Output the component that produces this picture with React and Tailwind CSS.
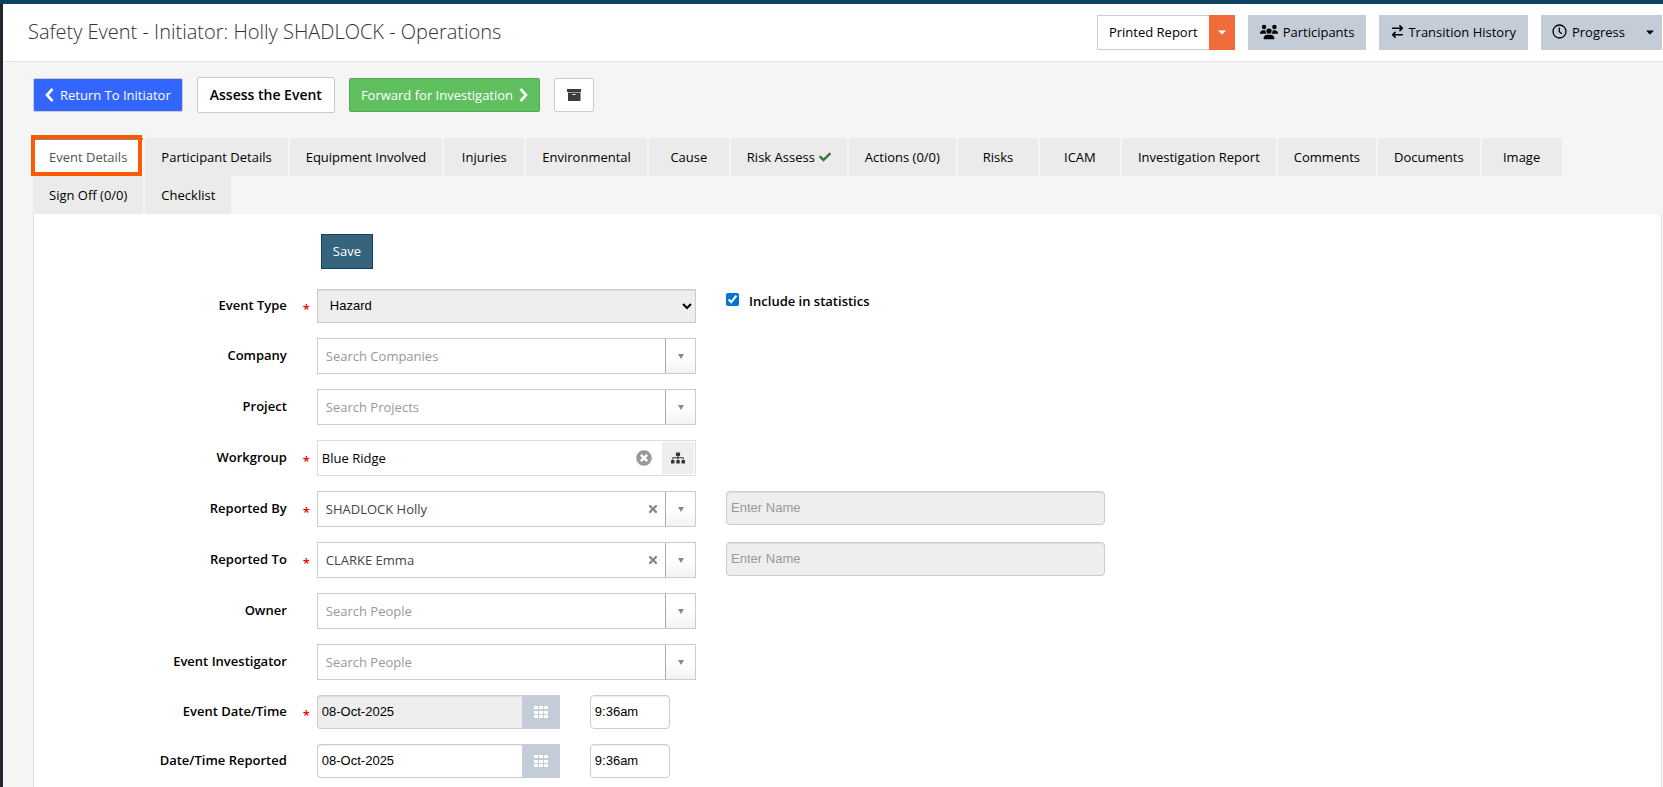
import React, { useState } from "react";
import { FaSitemap, FaCaretDown, FaCheck, FaTimesCircle, FaTimes } from "react-icons/fa";
import { FaArrowRightArrowLeft, FaUsers } from "react-icons/fa6";

const tabs = [
  "Event Details",
  "Participant Details",
  "Equipment Involved",
  "Injuries",
  "Environmental",
  "Cause",
  "Risk Assess",
  "Actions (0/0)",
  "Risks",
  "ICAM",
  "Investigation Report",
  "Comments",
  "Documents",
  "Image",
  "Sign Off (0/0)",
  "Checklist",
];

const inputClass =
  "w-full h-[34px] border border-[#ccc] rounded px-1 pb-px font-['Liberation_Sans',Arial,sans-serif] text-[13px] text-black placeholder:text-[#999] shadow-[inset_0_1px_1px_rgba(0,0,0,0.075)] outline-none";

function ArchiveIcon() {
  return (
    <svg width="14" height="14" viewBox="0 0 14 14" fill="#3c3c3c">
      <path d="M0 1h14v3H0z" />
      <path d="M1 4.600h12.500v8.400H1zM5.500 6v1h3V6z" fillRule="evenodd" />
    </svg>
  );
}

function Chevron({ right }) {
  return (
    <svg width="9" height="14" viewBox="0 0 9 14" fill="none" stroke="currentColor" strokeWidth="2.600">
      <path d={right ? "M1.500 1l5.500 6-5.500 6" : "M7.500 1L2 7l5.500 6"} />
    </svg>
  );
}

function ClockIcon() {
  return (
    <svg width="15" height="15" viewBox="0 0 15 15" fill="none" stroke="currentColor" strokeWidth="1.300">
      <circle cx="7.500" cy="7.500" r="6.500" />
      <path d="M7.300 3.500v4.200l2.600 2" />
    </svg>
  );
}

function GridIcon() {
  return (
    <svg width="14" height="14" viewBox="0 0 14 14" fill="#fff">
      {[1, 6, 10].map((y) =>
        [0, 5, 10].map((x) => <rect key={`${x}-${y}`} x={x} y={y} width="4" height="3" />)
      )}
    </svg>
  );
}

function Row({ label, id, required, side, children }) {
  return (
    <div className="grid grid-cols-12 mb-[15px]">
      <div className="col-span-2 flex items-center justify-end pr-[15px] pb-[2px] relative">
        <label htmlFor={id} className="font-semibold text-right">{label}</label>
        {required && <span className="absolute -right-2 top-1/2 -translate-y-1/2 pt-[6px] text-[13px] font-semibold text-[#e00]">*</span>}
      </div>
      <div className="col-span-3 px-[15px]">{children}</div>
      <div className="col-span-3 px-[15px]">{side}</div>
    </div>
  );
}

function Combo({ id, placeholder, initial = "" }) {
  const [value, setValue] = useState(initial);
  return (
    <div className="flex h-9 border border-[#ccc] bg-white">
      <input
        id={id}
        value={value}
        placeholder={placeholder}
        onChange={(e) => setValue(e.target.value)}
        className="flex-1 min-w-0 pl-2 text-[#444] placeholder:text-[#999] outline-none"
      />
      {value && (
        <button aria-label="Clear" onClick={() => setValue("")} className="px-[6px] text-[#888]">
          <FaTimes size={12} />
        </button>
      )}
      <button aria-label="Open list" className="w-[30px] flex items-center justify-center border-l border-[#aaa] bg-linear-to-b from-white from-50% to-[#f3f3f3]">
        <svg width="6" height="5" viewBox="0 0 6 5" fill="#888"><path d="M0 0h6L3 5z" /></svg>
      </button>
    </div>
  );
}

function DateTime({ id, disabled }) {
  return (
    <div className="flex">
      <input
        id={id}
        defaultValue="08-Oct-2025"
        readOnly={disabled}
        className={`${inputClass} max-w-[205px] rounded-r-none border-r-0 ${disabled ? "bg-[#eee]" : "bg-white"}`}
      />
      <button aria-label="Pick date" className="w-[38px] shrink-0 flex items-center justify-center bg-[#c4ccd8]">
        <GridIcon />
      </button>
      <input aria-label="Time" defaultValue="9:36am" className={`${inputClass} ml-[30px] max-w-20 bg-white`} />
    </div>
  );
}

export default function App() {
  const [activeTab, setActiveTab] = useState("Event Details");

  return (
    <div className="h-screen overflow-hidden flex flex-col border-t-4 border-[#0d4261] bg-[#f5f5f5] font-['Open_Sans',sans-serif] text-[13px] leading-5 text-black">
      <div className="flex flex-1 min-h-0">
        <aside className="w-[3px] shrink-0 bg-[#23262f]"></aside>
        <div className="flex-1 min-w-0 flex flex-col">
          <header className="flex items-center justify-between h-[58px] shrink-0 pl-[25px] pr-px pb-px bg-white border-b border-[#e5e5e5]">
            <h1 className="pb-px text-xl leading-8 font-light text-[#333] whitespace-nowrap">
              Safety Event - Initiator: Holly SHADLOCK - Operations
            </h1>
            <div className="flex gap-[13px] whitespace-nowrap">
              <div className="flex h-[35px]">
                <button className="px-[11px] pb-px border border-r-0 border-[#ccc] bg-white">Printed Report</button>
                <button aria-label="Report options" className="w-[26px] flex items-center justify-center bg-[#f26b3a] text-white">
                  <FaCaretDown size={12} />
                </button>
              </div>
              <button className="h-[35px] px-3 pb-px flex items-center gap-[5px] bg-[#c4ccd8]">
                <FaUsers size={18} /> Participants
              </button>
              <button className="h-[35px] px-3 pb-px flex items-center gap-1 bg-[#c4ccd8]">
                <FaArrowRightArrowLeft size={13} /> Transition History
              </button>
              <div className="flex h-[35px] bg-[#c4ccd8]">
                <button className="px-[11px] pb-px flex items-center gap-[5px]">
                  <ClockIcon /> Progress
                </button>
                <button aria-label="Progress options" className="w-[26px] flex items-center justify-center border-l border-[#c9cbd0]">
                  <FaCaretDown size={12} />
                </button>
              </div>
            </div>
          </header>

          <main className="flex-1 min-h-0 flex flex-col pl-[30px] pr-px pt-[15px]">
            <div className="flex items-center gap-[14px] h-9">
              <button className="h-[34px] px-[11px] flex items-center gap-[6px] border border-[#ccc] rounded-xs bg-[#36f] text-white">
                <Chevron /> Return To Initiator
              </button>
              <button className="h-9 px-3 border border-[#ccc] rounded-xs bg-white text-sm font-semibold">Assess the Event</button>
              <button className="h-[34px] px-[11px] flex items-center gap-[6px] border border-[#4cae4c] rounded-xs bg-[#60c060] text-white">
                Forward for Investigation <Chevron right />
              </button>
              <button aria-label="Archive" className="h-[34px] w-10 flex items-center justify-center border border-[#ccc] rounded-xs bg-white">
                <ArchiveIcon />
              </button>
            </div>

            <nav className="flex flex-wrap gap-x-[2px] mt-[25px] pr-[60px]">
              {tabs.map((tab) => (
                <div key={tab} className="relative">
                  <button
                    onClick={() => setActiveTab(tab)}
                    className={`h-[38px] min-w-20 px-4 flex items-center justify-center gap-1 ${
                      activeTab === tab ? "bg-white text-[#555] border-t-2 border-[#888] pb-[2px]" : "bg-[#ebebeb]"
                    }`}
                  >
                    {tab}
                    {tab === "Risk Assess" && <FaCheck size={12} className="text-[#3c763d]" />}
                  </button>
                  {activeTab === tab && (
                    <span className="absolute -left-[2px] -top-[3px] right-px bottom-0 border-4 border-[#ff5a00] pointer-events-none"></span>
                  )}
                </div>
              ))}
            </nav>

            <section className="flex-1 min-h-0 overflow-hidden bg-white border-x border-[#ddd] rounded-tr pt-5">
              <div className="-mx-[5px]">
                <div className="grid grid-cols-12 mb-5">
                  <div className="col-start-3 col-span-3 pl-[19px]">
                    <button className="h-[35px] px-[11px] pb-px border border-[#0d4261] bg-[#36647d] text-white">Save</button>
                  </div>
                </div>

                <Row
                  label="Event Type"
                  id="type"
                  required
                  side={
                    <label className="flex items-start gap-[10px] pt-1 font-semibold leading-4">
                      <input type="checkbox" defaultChecked className="size-[13px] accent-[#0075d7]" />
                      <span>Include in statistics</span>
                    </label>
                  }
                >
                  <select id="type" className="w-full h-[34px] pl-2 pb-px border border-[#ccc] bg-[#eee] font-['Liberation_Sans',Arial,sans-serif] text-[13px] shadow-[inset_0_1px_1px_rgba(0,0,0,0.075)]">
                    <option>Hazard</option>
                  </select>
                </Row>
                <Row label="Company" id="company">
                  <Combo id="company" placeholder="Search Companies" />
                </Row>
                <Row label="Project" id="project">
                  <Combo id="project" placeholder="Search Projects" />
                </Row>
                <Row label="Workgroup" id="workgroup" required>
                  <div className="flex items-center h-9 border border-[#ddd] p-px">
                    <input id="workgroup" defaultValue="Blue Ridge" className="flex-1 min-w-0 pl-[3px] outline-none" />
                    <button aria-label="Clear" className="px-[10px] text-[#999]"><FaTimesCircle size={16} /></button>
                    <button aria-label="Browse workgroups" className="h-8 w-8 flex items-center justify-center bg-[#eee] text-[#333]">
                      <FaSitemap size={14} />
                    </button>
                  </div>
                </Row>
                <Row
                  label="Reported By"
                  id="reportedBy"
                  required
                  side={<input aria-label="Reported by name" placeholder="Enter Name" className={`${inputClass} bg-[#eee]`} />}
                >
                  <Combo id="reportedBy" initial="SHADLOCK Holly" />
                </Row>
                <Row
                  label="Reported To"
                  id="reportedTo"
                  required
                  side={<input aria-label="Reported to name" placeholder="Enter Name" className={`${inputClass} bg-[#eee]`} />}
                >
                  <Combo id="reportedTo" initial="CLARKE Emma" />
                </Row>
                <Row label="Owner" id="owner">
                  <Combo id="owner" placeholder="Search People" />
                </Row>
                <Row label="Event Investigator" id="investigator">
                  <Combo id="investigator" placeholder="Search People" />
                </Row>
                <Row label="Event Date/Time" id="eventDate" required>
                  <DateTime id="eventDate" disabled />
                </Row>
                <Row label="Date/Time Reported" id="reportedDate">
                  <DateTime id="reportedDate" />
                </Row>
              </div>
            </section>
          </main>
        </div>
      </div>
    </div>
  );
}
